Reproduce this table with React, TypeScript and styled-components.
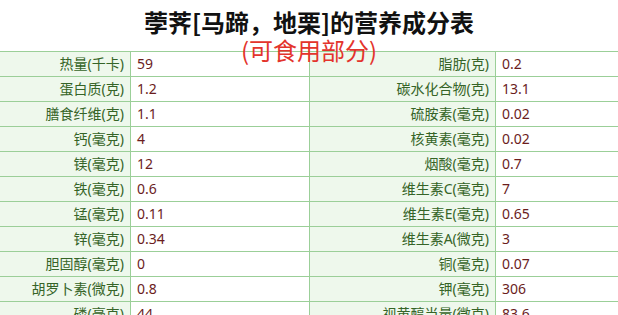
import styled, { createGlobalStyle } from "styled-components";

const GlobalStyle = createGlobalStyle`
  html, body {
    margin: 0;
    padding: 0;
    background: #ffffff;
  }
  body {
    font-family: "Noto Sans", "Noto Sans CJK SC", sans-serif;
  }
`;

const Page = styled.div`
  width: 618px;
  height: 315px;
  overflow: hidden;
`;

const Header = styled.div`
  height: 51px;
  text-align: center;
`;

const Title = styled.h1`
  margin: 0;
  padding-top: 6px;
  font-family: "Noto Sans CJK SC", sans-serif;
  font-size: 24px;
  line-height: 32px;
  font-weight: 700;
  color: #111111;
`;

const Subtitle = styled.div`
  font-family: "Noto Sans CJK SC", sans-serif;
  font-size: 24px;
  line-height: 24px;
  color: #e3342c;
`;

const Table = styled.table`
  width: 624px;
  margin-left: -2px;
  border-collapse: collapse;
  table-layout: fixed;
  font-family: "Noto Sans", "Noto Sans CJK SC", sans-serif;
  font-size: 14px;
`;

const Cell = styled.td<{ $label?: boolean }>`
  height: 24px;
  padding: 0 6px;
  border: 1px solid #9bcf98;
  line-height: 24px;
  white-space: nowrap;
  overflow: hidden;
  text-align: ${(p) => (p.$label ? "right" : "left")};
  background: ${(p) => (p.$label ? "#eef8ec" : "#ffffff")};
  color: ${(p) => (p.$label ? "#356427" : "#6b1d1d")};
`;

const rows: [string, string, string, string][] = [
  ["热量(千卡)", "59", "脂肪(克)", "0.2"],
  ["蛋白质(克)", "1.2", "碳水化合物(克)", "13.1"],
  ["膳食纤维(克)", "1.1", "硫胺素(毫克)", "0.02"],
  ["钙(毫克)", "4", "核黄素(毫克)", "0.02"],
  ["镁(毫克)", "12", "烟酸(毫克)", "0.7"],
  ["铁(毫克)", "0.6", "维生素C(毫克)", "7"],
  ["锰(毫克)", "0.11", "维生素E(毫克)", "0.65"],
  ["锌(毫克)", "0.34", "维生素A(微克)", "3"],
  ["胆固醇(毫克)", "0", "铜(毫克)", "0.07"],
  ["胡罗卜素(微克)", "0.8", "钾(毫克)", "306"],
  ["磷(毫克)", "44", "视黄醇当量(微克)", "83.6"],
];

function App() {
  return (
    <>
      <GlobalStyle />
      <Page>
        <Header>
          <Title>荸荠[马蹄，地栗]的营养成分表</Title>
          <Subtitle>(可食用部分)</Subtitle>
        </Header>
        <Table>
          <colgroup>
            <col style={{ width: 132 }} />
            <col style={{ width: 179 }} />
            <col style={{ width: 186 }} />
            <col />
          </colgroup>
          <tbody>
            {rows.map(([l1, v1, l2, v2]) => (
              <tr key={l1}>
                <Cell $label>{l1}</Cell>
                <Cell>{v1}</Cell>
                <Cell $label>{l2}</Cell>
                <Cell>{v2}</Cell>
              </tr>
            ))}
          </tbody>
        </Table>
      </Page>
    </>
  );
}

export default App;
